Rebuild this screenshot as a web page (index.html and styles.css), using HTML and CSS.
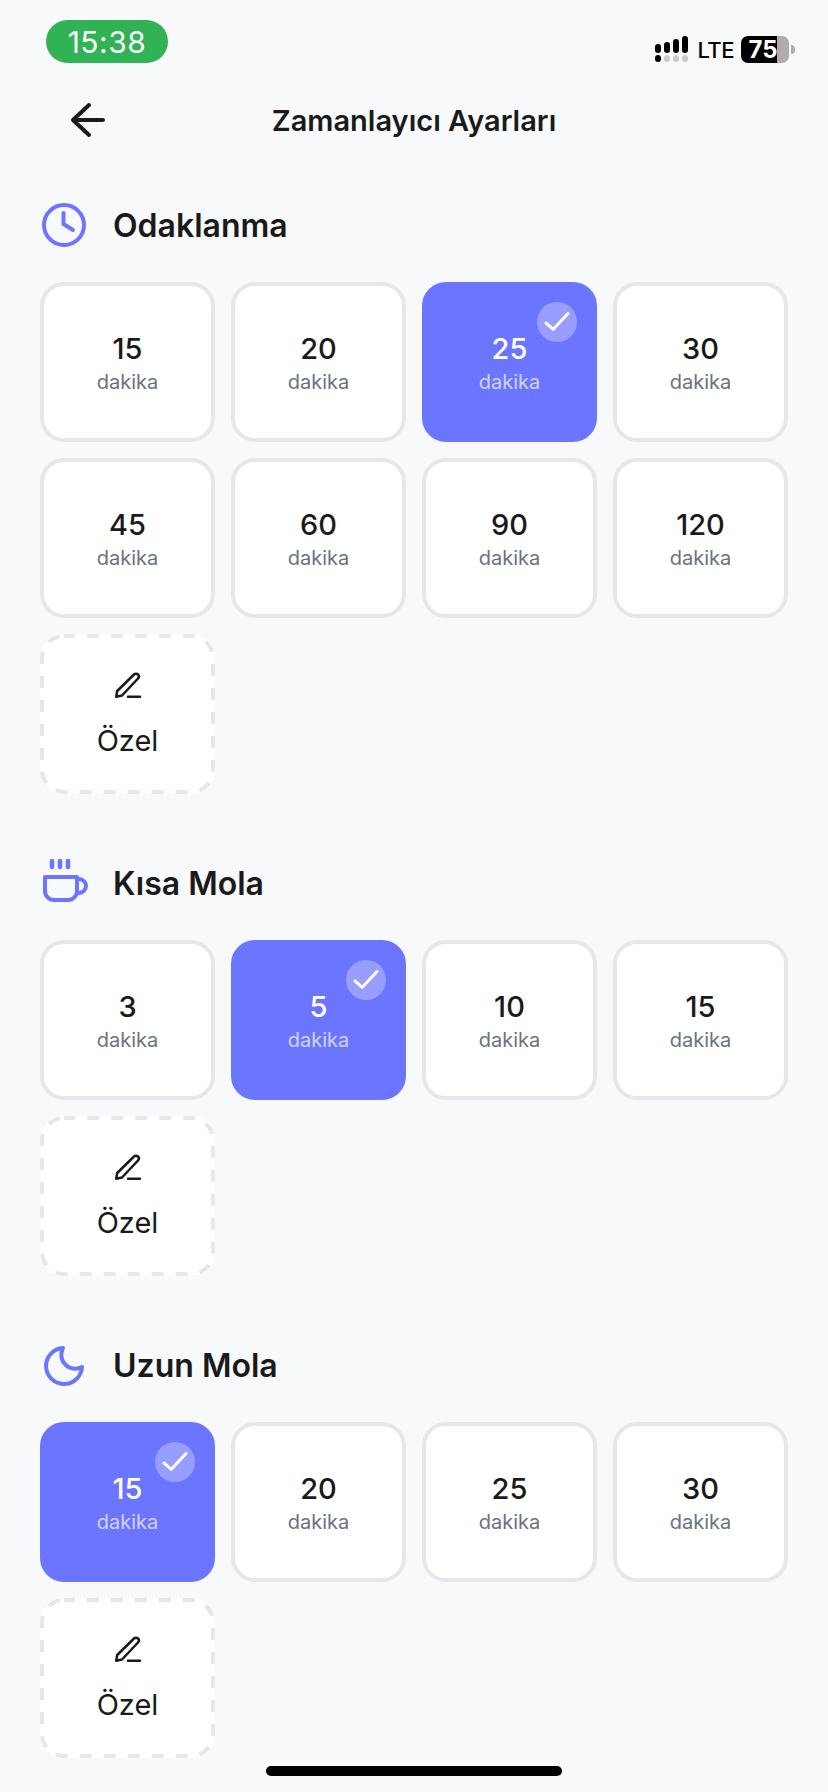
FILE: index.html
```html
<!DOCTYPE html>
<html lang="tr">
<head>
    <meta charset="UTF-8">
    <meta name="viewport" content="width=device-width, initial-scale=1.0">
    <title>Zamanlayıcı Ayarları</title>
    <link rel="stylesheet" href="styles.css">
</head>
<body>
    <svg class="defs" width="0" height="0">
        <symbol id="check" viewBox="0 0 40 40">
            <path d="M9 21 L16.3 27.3 L31 11.5" fill="none" stroke="#fff" stroke-width="3" stroke-linecap="round" stroke-linejoin="round"/>
        </symbol>
        <symbol id="pen" viewBox="0 0 30 30">
            <path d="M3.2 26.8 L4.2 21 L21 4.5 a2.8 2.8 0 0 1 4 4 L9 25.5 Z M15 26.8 H27" fill="none" stroke="#1a1a1a" stroke-width="2.5" stroke-linecap="round" stroke-linejoin="round"/>
        </symbol>
        <symbol id="dash" viewBox="0 0 175 160">
            <rect x="2" y="2" width="171" height="156" rx="22" fill="none" stroke="#e5e7eb" stroke-width="4" stroke-dasharray="12 12" stroke-dashoffset="1"/>
        </symbol>
    </svg>

    <div class="status-bar">
        <div class="time">15:38</div>
        <div class="status-right">
            <svg class="signal" width="33" height="27" viewBox="0 0 33 27">
                <rect x="0" y="8" width="6" height="9" rx="3" fill="#000"/>
                <rect x="9" y="6" width="6" height="11" rx="3" fill="#000"/>
                <rect x="18" y="3" width="6" height="14" rx="3" fill="#000"/>
                <rect x="27" y="0" width="6" height="17" rx="3" fill="#000"/>
                <rect x="0" y="19" width="6" height="7" rx="3" fill="#000"/>
                <rect x="9" y="19" width="6" height="7" rx="3" fill="#ccc"/>
                <rect x="18" y="19" width="6" height="7" rx="3" fill="#ccc"/>
                <rect x="27" y="19" width="6" height="7" rx="3" fill="#ccc"/>
            </svg>
            <span class="lte">LTE</span>
            <div class="battery">75</div>
            <div class="battery-nub"></div>
        </div>
    </div>

    <div class="header">
        <svg width="36" height="36" viewBox="0 0 36 36">
            <path d="M3 18 H33 M19 3 L3 18 L19 33" fill="none" stroke="#1a1a1a" stroke-width="4" stroke-linecap="round" stroke-linejoin="round"/>
        </svg>
        <h1>Zamanlayıcı Ayarları</h1>
    </div>

    <section class="section">
        <div class="section-head">
            <svg class="section-icon" width="48" height="48" viewBox="0 0 48 48">
                <circle cx="24" cy="24" r="20" fill="none" stroke="#6c75ff" stroke-width="4"/>
                <path d="M23.5 12 V23 L33 29" fill="none" stroke="#6c75ff" stroke-width="4" stroke-linecap="round" stroke-linejoin="round"/>
            </svg>
            <h2>Odaklanma</h2>
        </div>
        <div class="grid">
            <div class="card"><span class="num">15</span><span class="unit">dakika</span></div>
            <div class="card"><span class="num">20</span><span class="unit">dakika</span></div>
            <div class="card active"><span class="num">25</span><span class="unit">dakika</span><span class="badge"><svg width="40" height="40"><use href="#check"/></svg></span></div>
            <div class="card"><span class="num">30</span><span class="unit">dakika</span></div>
            <div class="card"><span class="num">45</span><span class="unit">dakika</span></div>
            <div class="card"><span class="num">60</span><span class="unit">dakika</span></div>
            <div class="card"><span class="num">90</span><span class="unit">dakika</span></div>
            <div class="card"><span class="num">120</span><span class="unit">dakika</span></div>
            <div class="card custom"><svg class="dash"><use href="#dash"/></svg><svg width="30" height="30"><use href="#pen"/></svg><span class="custom-label">Özel</span></div>
        </div>
    </section>

    <section class="section">
        <div class="section-head">
            <svg class="section-icon" width="48" height="48" viewBox="-2 1 48 48">
                <path d="M3 19 H35 V33 a9 9 0 0 1 -9 9 H12 a9 9 0 0 1 -9 -9 Z M35 21 h2 a7 7 0 0 1 0 14 h-2" fill="none" stroke="#6c75ff" stroke-width="4" stroke-linecap="round" stroke-linejoin="round"/>
                <path d="M10 3 v6 M18 3 v6 M26 3 v6" fill="none" stroke="#6c75ff" stroke-width="4.5" stroke-linecap="round"/>
            </svg>
            <h2>Kısa Mola</h2>
        </div>
        <div class="grid">
            <div class="card"><span class="num">3</span><span class="unit">dakika</span></div>
            <div class="card active"><span class="num">5</span><span class="unit">dakika</span><span class="badge"><svg width="40" height="40"><use href="#check"/></svg></span></div>
            <div class="card"><span class="num">10</span><span class="unit">dakika</span></div>
            <div class="card"><span class="num">15</span><span class="unit">dakika</span></div>
            <div class="card custom"><svg class="dash"><use href="#dash"/></svg><svg width="30" height="30"><use href="#pen"/></svg><span class="custom-label">Özel</span></div>
        </div>
    </section>

    <section class="section">
        <div class="section-head">
            <svg class="section-icon" width="48" height="48" viewBox="-4 -5 48 48">
                <path d="M19 2 A18 18 0 1 0 38 21 A14 14 0 0 1 19 2 Z" fill="none" stroke="#6c75ff" stroke-width="4" stroke-linejoin="round"/>
            </svg>
            <h2>Uzun Mola</h2>
        </div>
        <div class="grid">
            <div class="card active"><span class="num">15</span><span class="unit">dakika</span><span class="badge"><svg width="40" height="40"><use href="#check"/></svg></span></div>
            <div class="card"><span class="num">20</span><span class="unit">dakika</span></div>
            <div class="card"><span class="num">25</span><span class="unit">dakika</span></div>
            <div class="card"><span class="num">30</span><span class="unit">dakika</span></div>
            <div class="card custom"><svg class="dash"><use href="#dash"/></svg><svg width="30" height="30"><use href="#pen"/></svg><span class="custom-label">Özel</span></div>
        </div>
    </section>

    <div class="home-bar"></div>
</body>
</html>
```

FILE: styles.css
```css
body {
    font-family: Inter, "Noto Sans", sans-serif;
    margin: 0;
    height: 1792px;
    overflow: hidden;
    position: relative;
    background-color: #f8f9fb;
    color: #1a1a1a;
}
.defs {
    display: block;
    height: 0;
}
.status-bar {
    display: flex;
    justify-content: space-between;
    align-items: flex-start;
    padding: 20px 33px 0 46px;
}
.time {
    display: flex;
    align-items: center;
    justify-content: center;
    width: 122px;
    height: 43px;
    padding-top: 1px;
    box-sizing: border-box;
    border-radius: 22px;
    background-color: #30b255;
    color: #fff;
    font-size: 30px;
    letter-spacing: 0.5px;
}
.status-right {
    display: flex;
    align-items: center;
    margin-top: 16px;
    color: #000;
}
.signal {
    margin-right: 10px;
}
.lte {
    font-size: 22px;
    font-weight: 500;
    margin-right: 7px;
    letter-spacing: -0.5px;
}
.battery {
    display: flex;
    align-items: center;
    justify-content: center;
    width: 48px;
    height: 27px;
    padding-right: 4px;
    box-sizing: border-box;
    border-radius: 7px;
    background: linear-gradient(to right, #000 75%, #aeaeb2 75%);
    color: #fff;
    font-size: 24px;
    font-weight: 700;
}
.battery-nub {
    width: 4px;
    height: 9px;
    margin-left: 2px;
    border-radius: 0 4px 4px 0;
    background-color: #aeaeb2;
}
.header {
    display: grid;
    grid-template-columns: 1fr auto 1fr;
    align-items: center;
    height: 64px;
    margin-top: 25px;
    padding: 0 41px 0 70px;
}
.header h1 {
    margin: 0 0 0 -29px;
    font-size: 29px;
    font-weight: 600;
}
.section {
    margin-top: 65px;
    padding: 0 40px;
}
.header + .section {
    margin-top: 49px;
}
.section-head {
    display: flex;
    align-items: center;
    gap: 25px;
    height: 48px;
    margin-bottom: 33px;
}
.section-head h2 {
    margin: 0;
    font-size: 32px;
    font-weight: 600;
}
.grid {
    display: grid;
    grid-template-columns: repeat(4, 1fr);
    gap: 16px;
}
.card {
    position: relative;
    display: flex;
    flex-direction: column;
    align-items: center;
    justify-content: center;
    height: 160px;
    padding-top: 3px;
    box-sizing: border-box;
    border: 4px solid #e5e7eb;
    border-radius: 24px;
    background-color: #fff;
}
.num {
    font-size: 29px;
    font-weight: 500;
    line-height: 36px;
}
.unit {
    font-size: 20px;
    line-height: 30px;
    color: #6b7280;
}
.active {
    border-color: #6c75ff;
    background-color: #6c75ff;
    color: #fff;
}
.active .unit {
    color: rgba(255, 255, 255, 0.7);
}
.badge {
    position: absolute;
    top: 16px;
    right: 16px;
    width: 40px;
    height: 40px;
    border-radius: 50%;
    background-color: rgba(255, 255, 255, 0.3);
}
.custom {
    border: none;
    padding-top: 0;
    gap: 23px;
}
.dash {
    position: absolute;
    top: 0;
    left: 0;
    width: 100%;
    height: 100%;
}
.custom-label {
    font-size: 29px;
    font-weight: 400;
    line-height: 36px;
}
.home-bar {
    position: absolute;
    left: 266px;
    top: 1766px;
    width: 296px;
    height: 10px;
    border-radius: 5px;
    background-color: #000;
}
```
